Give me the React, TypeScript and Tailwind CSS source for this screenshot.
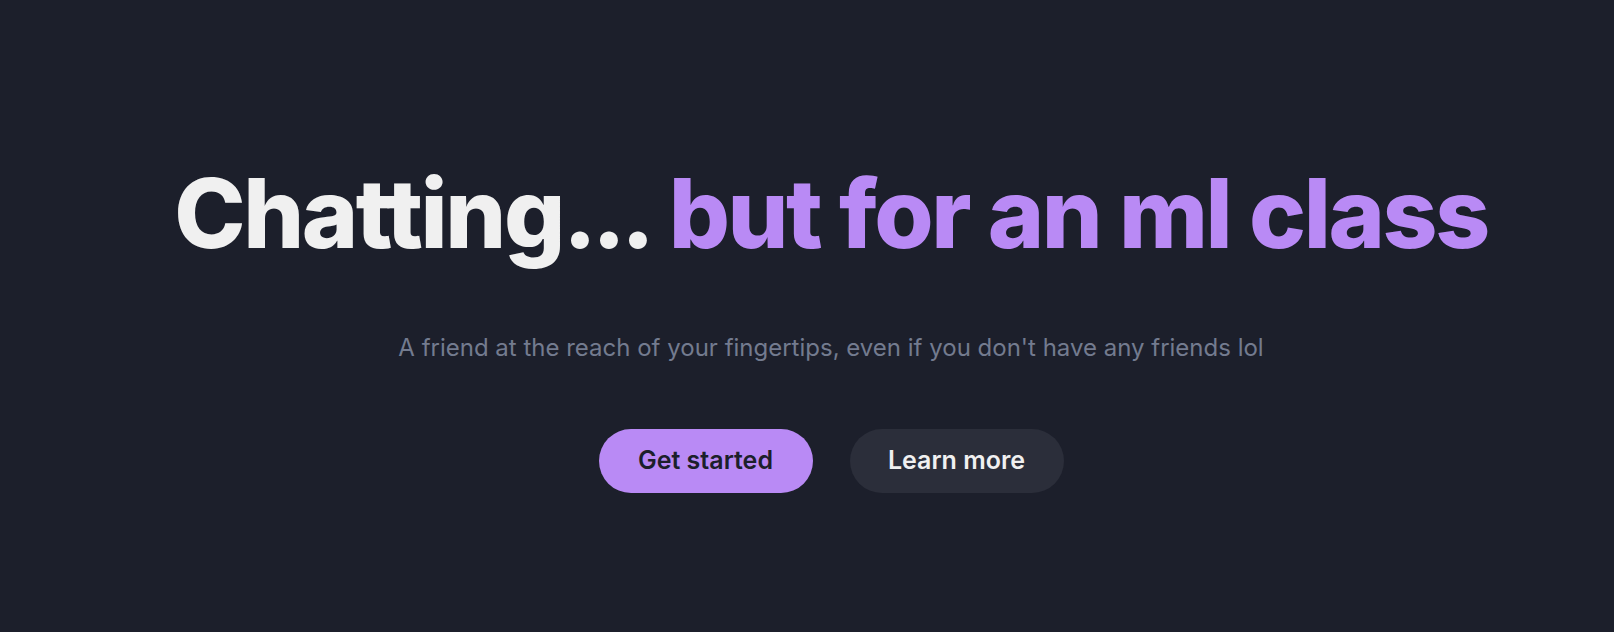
export default function App() {
  return (
    <div
      className="flex h-[632px] w-full flex-col items-center bg-[#1c1f2b] pl-12 pt-[165px]"
      style={{ fontFamily: "Inter, 'Noto Sans', sans-serif" }}
    >
      <h1 className="text-8xl font-extrabold leading-none tracking-tight text-[#f0f0f0]">
        Chatting
        <span className="tracking-[-0.05em] [font-feature-settings:'calt'_0] [font-variant-ligatures:none]">
          ...
        </span>{" "}
        <span className="text-[#b98af5]">but for an ml class</span>
      </h1>
      <p className="mt-[71px] text-2xl text-[#737b8f]">
        A friend at the reach of your fingertips, even if you don't have any friends lol
      </p>
      <div className="mt-[65px] flex gap-[37px]">
        <button className="h-16 w-[214px] rounded-full bg-[#b98af5] text-[25px] font-semibold text-[#1c1f2b]">
          Get started
        </button>
        <button className="h-16 w-[214px] rounded-full bg-[#2b2e3a] text-[25px] font-semibold text-[#f0f0f0]">
          Learn more
        </button>
      </div>
    </div>
  );
}
